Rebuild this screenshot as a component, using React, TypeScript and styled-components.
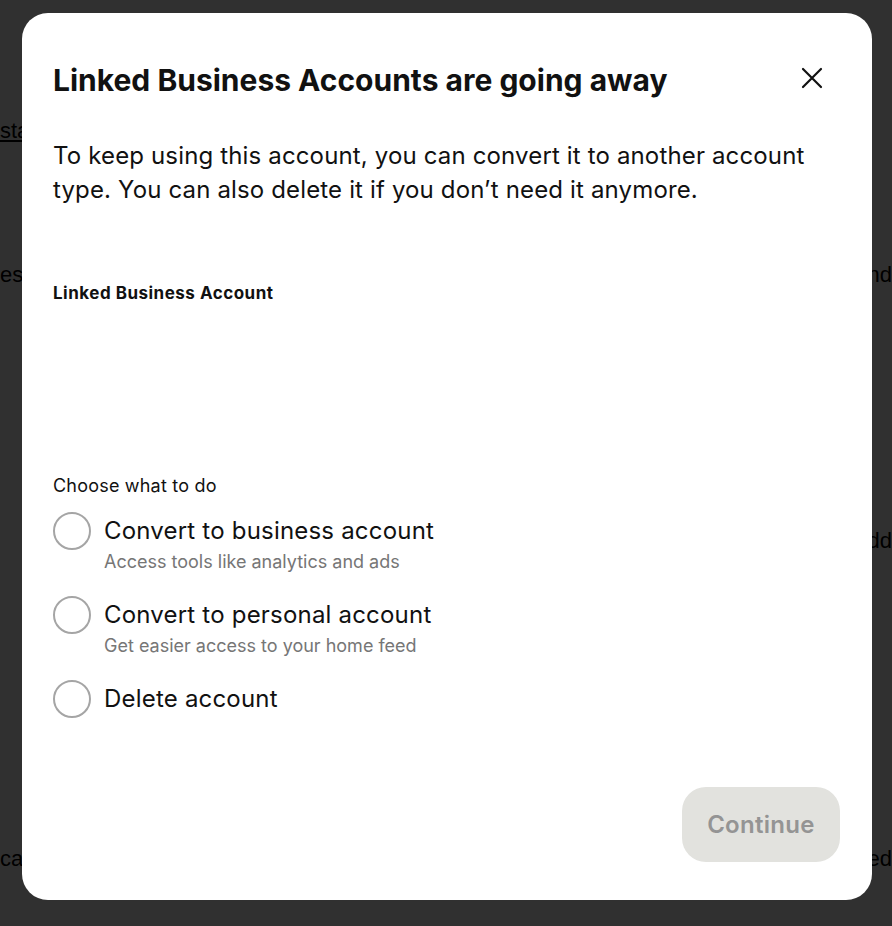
import styled, { createGlobalStyle } from "styled-components";

const GlobalStyle = createGlobalStyle`
    html, body {
        margin: 0;
        padding: 0;
        width: 100%;
        height: 100%;
        overflow: hidden;
        background: #ffffff;
        font-family: Inter, "Noto Sans", "Liberation Sans", sans-serif;
        color: #111111;
    }
    * {
        box-sizing: border-box;
    }
`;

interface Option {
    id: string;
    label: string;
    hint?: string;
}

const options: Option[] = [
    { id: "business", label: "Convert to business account", hint: "Access tools like analytics and ads" },
    { id: "personal", label: "Convert to personal account", hint: "Get easier access to your home feed" },
    { id: "delete", label: "Delete account" },
];

const backdropRows = [
    { top: 118, left: "stats", right: "" },
    { top: 262, left: "esta", right: "and" },
    { top: 528, left: "", right: "dd" },
    { top: 846, left: "cant", right: "e ed" },
];

const App = () => {
    return (
        <>
            <GlobalStyle />
            <Page>
                {backdropRows.map((row, i) => (
                    <PageRow key={i} $top={row.top}>
                        <PageText $underline={i === 0}>{row.left}</PageText>
                        <PageText>{row.right}</PageText>
                    </PageRow>
                ))}
            </Page>
            <Overlay>
                <Modal role="dialog" aria-labelledby="modal-title">
                    <Header>
                        <Title id="modal-title">Linked Business Accounts are going away</Title>
                        <CloseBtn aria-label="Close">
                            <svg width="22" height="22" viewBox="0 0 22 22" fill="none">
                                <path d="M2 2L20 20M20 2L2 20" stroke="#111" strokeWidth="2.2" strokeLinecap="round" />
                            </svg>
                        </CloseBtn>
                    </Header>
                    <Body>
                        To keep using this account, you can convert it to another account type. You can also delete it if you don’t need it anymore.
                    </Body>
                    <SectionLabel>Linked Business Account</SectionLabel>
                    <AccountSlot />
                    <ChooseLabel>Choose what to do</ChooseLabel>
                    <OptionList>
                        {options.map((opt) => (
                            <OptionRow key={opt.id}>
                                <Radio type="radio" name="action" value={opt.id} />
                                <OptionText>
                                    <OptionLabel>{opt.label}</OptionLabel>
                                    {opt.hint && <OptionHint>{opt.hint}</OptionHint>}
                                </OptionText>
                            </OptionRow>
                        ))}
                    </OptionList>
                    <Footer>
                        <ContinueBtn disabled>Continue</ContinueBtn>
                    </Footer>
                </Modal>
            </Overlay>
        </>
    );
};
export default App;

const Page = styled.div`
    position: relative;
    width: 100vw;
    height: 100vh;
    background: #ffffff;
`;

const PageRow = styled.div<{ $top: number }>`
    display: flex;
    justify-content: space-between;
    position: absolute;
    left: 0;
    right: 0;
    top: ${({ $top }) => $top}px;
    font-family: "Liberation Sans", sans-serif;
    font-size: 22px;
    color: #000;
`;

const PageText = styled.span<{ $underline?: boolean }>`
    text-decoration: ${({ $underline }) => ($underline ? "underline" : "none")};
`;

const Overlay = styled.div`
    position: fixed;
    inset: 0;
    display: flex;
    justify-content: flex-start;
    align-items: flex-start;
    padding: 13px 0 0 22px;
    background: rgba(0, 0, 0, 0.81);
`;

const Modal = styled.div`
    display: flex;
    flex-direction: column;
    width: 850px;
    height: 887px;
    padding: 48px 32px 38px 31px;
    background: #ffffff;
    border-radius: 26px;
`;

const Header = styled.div`
    display: flex;
    justify-content: space-between;
    align-items: center;
`;

const Title = styled.h1`
    margin: 0;
    font-size: 30px;
    line-height: 38px;
    font-weight: 700;
    letter-spacing: 0;
    color: #111111;
`;

const CloseBtn = styled.button`
    display: flex;
    align-items: center;
    justify-content: center;
    width: 40px;
    height: 40px;
    margin-right: 8px;
    margin-top: -4px;
    padding: 0;
    border: none;
    background: transparent;
    cursor: pointer;
`;

const Body = styled.p`
    margin: 40px 0 0 0;
    font-size: 24px;
    line-height: 34px;
    letter-spacing: 0.15px;
    color: #111111;
    max-width: 780px;
`;

const SectionLabel = styled.div`
    margin-top: 75px;
    font-size: 17px;
    line-height: 22px;
    font-weight: 700;
    letter-spacing: 0.5px;
    color: #111111;
`;

const AccountSlot = styled.div`
    height: 170px;
`;

const ChooseLabel = styled.div`
    font-size: 18px;
    line-height: 24px;
    letter-spacing: 0.2px;
    color: #111111;
`;

const OptionList = styled.div`
    display: flex;
    flex-direction: column;
    gap: 22px;
    margin-top: 14px;
`;

const OptionRow = styled.label`
    display: flex;
    align-items: flex-start;
    gap: 13px;
    cursor: pointer;
`;

const Radio = styled.input`
    appearance: none;
    flex-shrink: 0;
    width: 38px;
    height: 38px;
    margin: 0;
    border: 2px solid #a5a5a5;
    border-radius: 50%;
    background: #ffffff;
    cursor: pointer;
`;

const OptionText = styled.div`
    display: flex;
    flex-direction: column;
    padding-top: 2px;
`;

const OptionLabel = styled.span`
    font-size: 24px;
    line-height: 34px;
    letter-spacing: 0.2px;
    color: #111111;
`;

const OptionHint = styled.span`
    margin-top: 2px;
    font-size: 18px;
    line-height: 24px;
    color: #767676;
`;

const Footer = styled.div`
    display: flex;
    justify-content: flex-end;
    margin-top: auto;
`;

const ContinueBtn = styled.button`
    width: 158px;
    height: 75px;
    border: none;
    border-radius: 24px;
    background: #e2e2de;
    color: #949494;
    font-family: Inter, "Noto Sans", sans-serif;
    font-size: 24px;
    font-weight: 600;
    letter-spacing: 0.3px;
    cursor: not-allowed;
`;
